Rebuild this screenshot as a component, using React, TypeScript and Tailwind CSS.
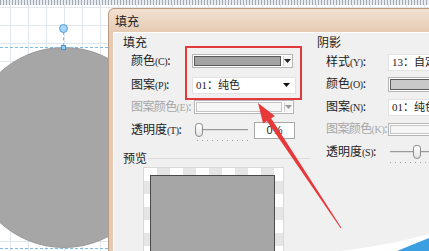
import React from "react";

const FONT = "font-['Noto_Sans_CJK_SC','Liberation_Sans',sans-serif]";

const Label = ({ name, hint, disabled = false, width }: { name: string; hint: string; disabled?: boolean; width: string }) => (
  <div
    className={`${width} shrink-0 whitespace-nowrap text-[12px] leading-[14px] ${name.length > 3 ? "tracking-[-0.6px]" : ""} ${disabled ? "text-[#a6a6a6]" : "text-[#222]"}`}
  >
    {name}
    <span className="font-['Liberation_Serif',serif] text-[10px] tracking-[-0.4px]">({hint})</span>:
  </div>
);

const Tri = ({ color = "#111" }: { color?: string }) => (
  <svg width="7" height="4" viewBox="0 0 7 4">
    <path d="M0 0h7L3.5 4z" fill={color} />
  </svg>
);

const SwatchCombo = ({ w, swatch, disabled = false }: { w: string; swatch: string; disabled?: boolean }) => (
  <div className={`${w} flex h-[14px] shrink-0 gap-[2px] border border-[#b5b5b5] bg-white p-[1px]`}>
    <div className={`flex-1 border ${disabled ? "border-[#c4c4c4]" : "border-[#5a5a5a]"} ${swatch}`} />
    <div className="flex w-[8px] items-center justify-center border-l border-[#d0d0d0] bg-[#f4f4f4]">
      <Tri color={disabled ? "#9a9a9a" : "#222"} />
    </div>
  </div>
);

const TextCombo = ({ w, text, arrow = true }: { w: string; text: string; arrow?: boolean }) => (
  <div className={`${w} flex h-[17px] shrink-0 items-center justify-between overflow-hidden border border-[#e2e2e2] bg-white pl-[3px] pr-[5px] text-[12px] text-[#222]`}>
    <span className="whitespace-nowrap font-['Liberation_Serif','Noto_Sans_CJK_SC',serif] text-[11px]">
      {text}
    </span>
    {arrow && <Tri />}
  </div>
);

const Slider = ({ trackW, thumbAt }: { trackW: string; thumbAt: string }) => (
  <div className={`relative ${trackW} h-[22px] shrink-0`}>
    <div className="absolute left-[2px] right-0 top-[10px] h-[2px] border-t border-[#9a9a9a] border-b-white bg-[#dcdcdc]" />
    <div className="absolute left-[2px] right-0 top-[21px] h-[1px] bg-[repeating-linear-gradient(to_right,#a0a0a0_0_1px,transparent_1px_5px)]" />
    <div className={`absolute ${thumbAt} top-[4px] h-[14px] w-[8px] rounded-[4px] rounded-b-[5px] border border-[#8a8a8a] bg-[linear-gradient(#ffffff,#e4e4e4)]`} />
  </div>
);

export default function App() {
  return (
    <div className={`relative flex h-[251px] w-[429px] flex-col overflow-hidden bg-white ${FONT}`}>
      {/* ruler */}
      <div className="h-[5px] shrink-0 bg-[repeating-linear-gradient(to_right,#a2aab2_0_1px,#e8ecf0_1px_3px)]" />
      {/* canvas */}
      <div className="relative flex-1 bg-[linear-gradient(to_right,#e1e7ee_1px,transparent_1px),linear-gradient(to_bottom,#e1e7ee_1px,transparent_1px)] bg-size-[18px_18px] bg-position-[10px_2px]">
        <div className="absolute left-[-31px] top-[42px] h-[201px] w-[190px] rounded-full border border-[#999] bg-[#a6a6a6]" />
        <div className="absolute left-0 top-[42px] w-[108px] border-t border-dashed border-[#7cbbe8]" />
        <div className="absolute left-0 top-[243px] w-[108px] border-t border-dashed border-[#7cbbe8]" />
        <div className="absolute left-[63px] top-[27px] h-[14px] border-l border-dashed border-[#7cbbe8]" />
        <div className="absolute left-[59px] top-[19px] h-[9px] w-[9px] rounded-full border border-[#4d9edb] bg-[#a9d5f6]" />
        <div className="absolute left-[61px] top-[40px] h-[5px] w-[5px] border border-[#3f92d4] bg-[#9acdf2]" />
      </div>

      {/* dialog */}
      <div className="absolute left-[108px] top-[8px] flex h-[260px] w-[340px] flex-col rounded-tl-[6px] border border-[#b89a80] bg-[#e6c9b0]">
        <div className="flex h-[23px] shrink-0 items-center rounded-tl-[6px] bg-[linear-gradient(#f2e1d2,#e7cbb3)] pl-[6px] text-[12px] text-[#1a1a1a]">
          填充
        </div>
        <div className="ml-[4px] flex flex-1 border-l border-t border-white bg-[#f0f0f0]">
          {/* left column */}
          <div className="flex w-[196px] shrink-0 flex-col pt-[2px]">
            <div className="h-[14px] pl-[9px] text-[12px] leading-[14px] text-[#222]">填充</div>
            <div className="mt-[1px] flex h-[22px] items-center pl-[17px]">
              <Label name="颜色" hint="C" width="w-[61px]" />
              <SwatchCombo w="w-[101px]" swatch="bg-[#a3a3a3]" />
            </div>
            <div className="mt-[2px] flex h-[22px] items-center pl-[17px]">
              <Label name="图案" hint="P" width="w-[61px]" />
              <TextCombo w="w-[104px]" text="01：纯色" />
            </div>
            <div className="flex h-[22px] items-center pl-[17px]">
              <Label name="图案颜色" hint="E" disabled width="w-[63px]" />
              <SwatchCombo w="w-[100px]" swatch="bg-[#f6f6f6]" disabled />
            </div>
            <div className="mt-[1px] flex h-[22px] items-center pl-[17px]">
              <Label name="透明度" hint="T" width="w-[64px]" />
              <Slider trackW="w-[53px]" thumbAt="left-0" />
              <div className="ml-[6px] flex h-[17px] w-[41px] shrink-0 items-center justify-center border border-[#a9a9a9] bg-white font-['Liberation_Sans',sans-serif] text-[11px] text-[#222]">
                0%
              </div>
            </div>
            <div className="mt-[10px] flex h-[14px] items-center pl-[9px]">
              <span className="text-[12px] leading-[14px] text-[#222]">预览</span>
              <div className="ml-[1px] flex-1 border-t border-[#dadada]" />
            </div>
            <div className="ml-[29px] mt-[2px] h-[100px] w-[141px] border border-[#d8d8d8] bg-[repeating-conic-gradient(#e5e5e5_0%_25%,#ffffff_0%_50%)] bg-size-[26px_26px] pl-[6px] pr-[8px] pt-[7px]">
              <div className="h-full border border-[#4a4a4a] bg-[#a6a6a6]" />
            </div>
          </div>

          {/* right column */}
          <div className="flex flex-1 flex-col pt-[2px]">
            <div className="h-[14px] pl-[7px] text-[12px] leading-[14px] text-[#222]">阴影</div>
            <div className="mt-[2px] flex h-[22px] items-center pl-[16px]">
              <Label name="样式" hint="Y" width="w-[62px]" />
              <TextCombo w="w-[80px]" text="13：自定义" arrow={false} />
            </div>
            <div className="flex h-[22px] items-center pl-[16px]">
              <Label name="颜色" hint="O" width="w-[62px]" />
              <div className="flex h-[15px] w-[80px] shrink-0 border border-[#b5b5b5] bg-white p-[1px]">
                <div className="flex-1 border border-[#5a5a5a] bg-[#c9c9c9]" />
              </div>
            </div>
            <div className="mt-[1px] flex h-[22px] items-center pl-[16px]">
              <Label name="图案" hint="N" width="w-[62px]" />
              <TextCombo w="w-[80px]" text="01：纯色" arrow={false} />
            </div>
            <div className="flex h-[22px] items-center pl-[16px]">
              <Label name="图案颜色" hint="K" disabled width="w-[62px]" />
              <div className="flex h-[13px] w-[80px] shrink-0 border border-[#b5b5b5] bg-white p-[1px]">
                <div className="flex-1 border border-[#c4c4c4] bg-[#f6f6f6]" />
              </div>
            </div>
            <div className="mt-[1px] flex h-[22px] items-center pl-[16px]">
              <Label name="透明度" hint="S" width="w-[62px]" />
              <Slider trackW="w-[60px]" thumbAt="left-[25px]" />
            </div>
          </div>
        </div>
      </div>

      {/* highlight box */}
      <div className="absolute left-[185px] top-[46px] h-[54px] w-[117px] border-2 border-[#e23a3a]" />

      {/* arrow + corner swoosh */}
      <svg className="pointer-events-none absolute inset-0" width="429" height="251" viewBox="0 0 429 251">
        <path d="M340 251 Q385 246 429 234 L429 251 Z" fill="#ffffff" />
        <path d="M397 251 Q414 244 429 238 L429 251 Z" fill="#3b9fe1" />
        <polygon
          points="258,103 263.1,123.5 266.9,121.1 340.6,228.3 341.4,227.7 271.1,118.3 274.9,115.9"
          fill="#e8393a"
        />
      </svg>
    </div>
  );
}
